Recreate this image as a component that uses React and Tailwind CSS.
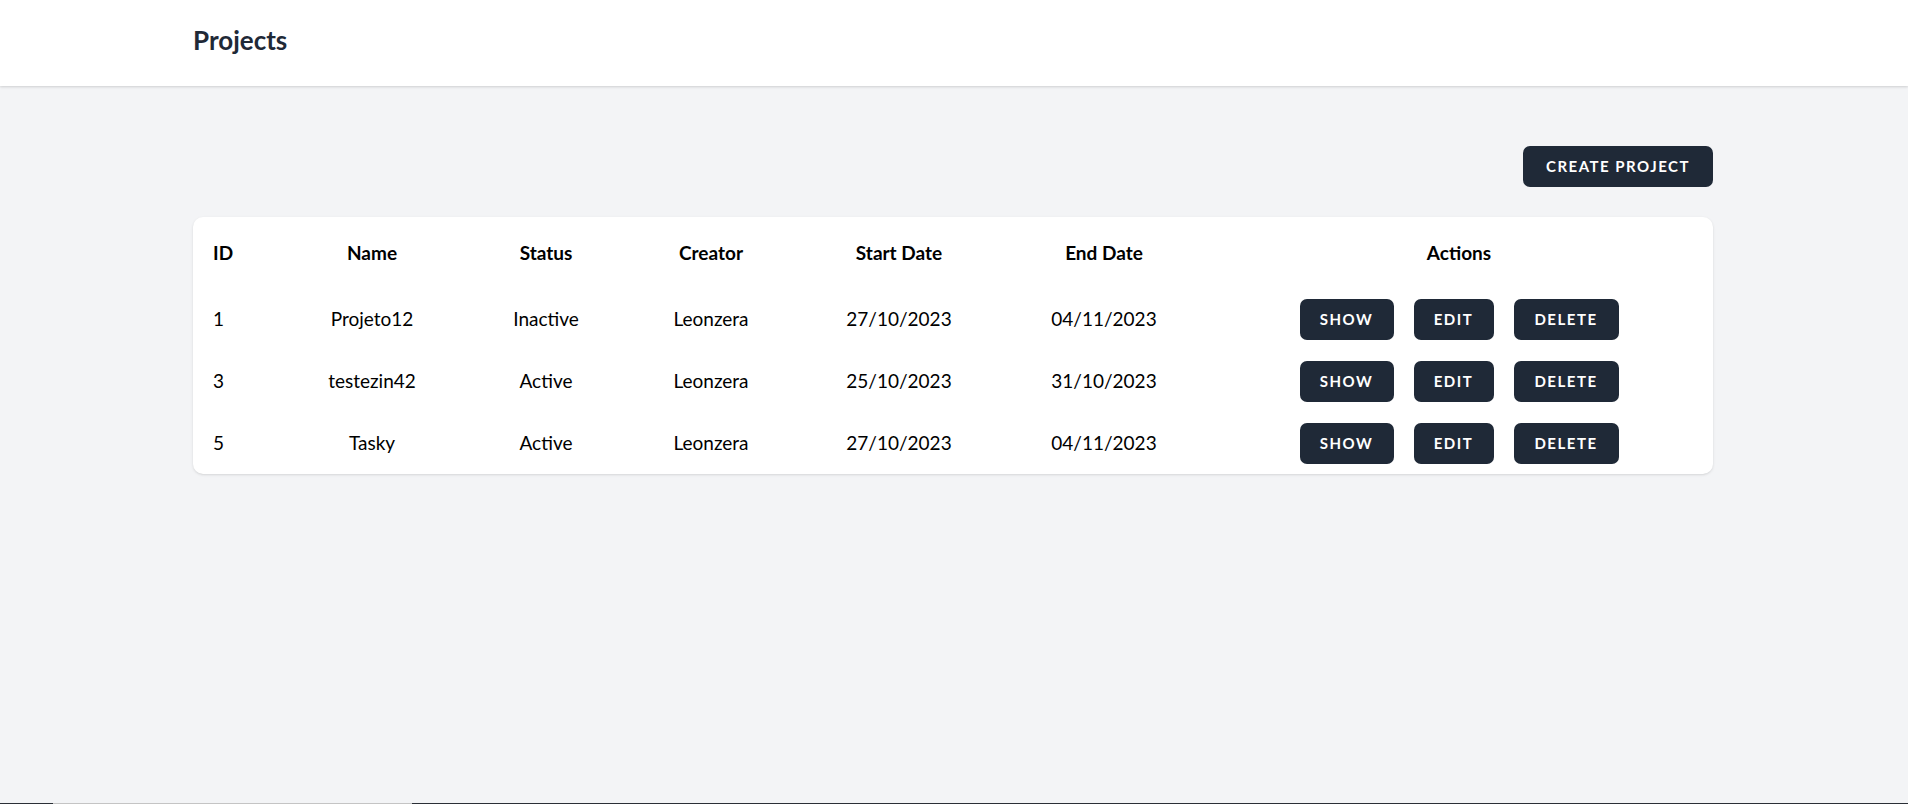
import React from "react";

const PROJECTS = [
  { id: 1, name: "Projeto12", status: "Inactive", creator: "Leonzera", start: "27/10/2023", end: "04/11/2023" },
  { id: 3, name: "testezin42", status: "Active", creator: "Leonzera", start: "25/10/2023", end: "31/10/2023" },
  { id: 5, name: "Tasky", status: "Active", creator: "Leonzera", start: "27/10/2023", end: "04/11/2023" },
];

const btn =
  "inline-flex items-center justify-center h-[41px] rounded-[7px] bg-[#1f2937] text-white font-bold text-[15px] uppercase tracking-[0.1em]";

export default function App() {
  return (
    <div className="min-h-screen flex flex-col bg-[#f3f4f6] text-black" style={{ fontFamily: "Lato, 'Open Sans', sans-serif" }}>
      <header className="bg-white h-[86px] flex items-center pl-[193px] pr-[195px] pb-[5px] shadow-[0_1px_3px_rgba(0,0,0,0.1),0_1px_2px_rgba(0,0,0,0.06)]">
        <h2 className="text-[26px] font-bold text-[#1f2937] leading-tight">Projects</h2>
      </header>

      <main className="flex-1 pl-[193px] pr-[195px] pt-[60px]">
        <div className="flex justify-end">
          <button className={`${btn} w-[190px]`}>Create Project</button>
        </div>

        <div className="mt-[30px] bg-white rounded-[10px] shadow-sm overflow-hidden">
          <table className="w-full table-fixed text-[19px]">
            <colgroup>
              <col className="w-[92px]" />
              <col className="w-[174px]" />
              <col className="w-[174px]" />
              <col className="w-[156px]" />
              <col className="w-[220px]" />
              <col className="w-[190px]" />
              <col />
            </colgroup>
            <thead>
              <tr className="h-[71px] font-bold">
                <th className="text-left pl-[20px] pt-[2px]">ID</th>
                <th className="pt-[2px]">Name</th>
                <th className="pt-[2px]">Status</th>
                <th className="pt-[2px]">Creator</th>
                <th className="pt-[2px]">Start Date</th>
                <th className="pt-[2px]">End Date</th>
                <th className="pl-[6px] pt-[2px]">Actions</th>
              </tr>
            </thead>
            <tbody>
              {PROJECTS.map((p) => (
                <tr key={p.id} className="h-[62px]">
                  <td className="pl-[20px]">{p.id}</td>
                  <td className="text-center">{p.name}</td>
                  <td className="text-center">{p.status}</td>
                  <td className="text-center">{p.creator}</td>
                  <td className="text-center">{p.start}</td>
                  <td className="text-center">{p.end}</td>
                  <td className="pl-[6px]">
                    <div className="flex justify-center gap-[20px]">
                      <button className={`${btn} w-[94px]`}>Show</button>
                      <button className={`${btn} w-[80px]`}>Edit</button>
                      <button className={`${btn} w-[105px]`}>Delete</button>
                    </div>
                  </td>
                </tr>
              ))}
            </tbody>
          </table>
        </div>
      </main>

      <div className="h-px flex">
        <div className="w-[53px] bg-[#2a2f36]" />
        <div className="w-[359px] bg-[#c4c4c4]" />
        <div className="flex-1 bg-[#2a2f36]" />
      </div>
    </div>
  );
}
